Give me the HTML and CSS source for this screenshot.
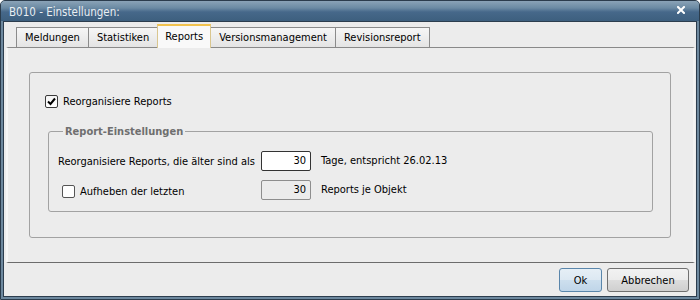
FILE: index.html
```html
<!DOCTYPE html>
<html lang="de">
<head>
<meta charset="utf-8">
<title>B010 - Einstellungen</title>
<link rel="stylesheet" href="styles.css">
</head>
<body>
<div class="window">
  <div class="titlebar">
    <span class="title">B010 - Einstellungen:</span>
    <svg class="close" width="8" height="8" viewBox="0 0 8 8"><path d="M1 1 L7 7 M7 1 L1 7" stroke="#fff" stroke-width="2" stroke-linecap="square"/></svg>
  </div>
  <div class="client">
    <div class="tabs">
      <div class="tab">Meldungen</div>
      <div class="tab">Statistiken</div>
      <div class="tab active">Reports</div>
      <div class="tab">Versionsmanagement</div>
      <div class="tab">Revisionsreport</div>
    </div>
    <div class="panel">
      <div class="group">
        <div class="check-row">
          <span class="cb"><svg width="11" height="11" viewBox="0 0 11 11"><path d="M2 5.5 L4.5 8 L9 2.5" fill="none" stroke="#000" stroke-width="2"/></svg></span>
          <span>Reorganisiere Reports</span>
        </div>
        <fieldset class="subgroup">
          <legend>Report-Einstellungen</legend>
          <div class="row">
            <span class="row-label">Reorganisiere Reports, die älter sind als</span>
            <span class="field">30</span>
            <span class="after">Tage, entspricht 26.02.13</span>
          </div>
          <div class="row">
            <span class="row-label">
              <span class="check-row inner"><span class="cb"></span><span>Aufheben der letzten</span></span>
            </span>
            <span class="field disabled">30</span>
            <span class="after">Reports je Objekt</span>
          </div>
        </fieldset>
      </div>
    </div>
    <div class="footer">
      <button class="btn default">Ok</button>
      <button class="btn">Abbrechen</button>
    </div>
  </div>
</div>
</body>
</html>
```

FILE: styles.css
```css
* { box-sizing: border-box; }
html, body { margin: 0; padding: 0; }
body {
  width: 700px;
  height: 300px;
  font-family: "DejaVu Sans Condensed", "DejaVu Sans", sans-serif;
  font-size: 11px;
  color: #000;
  background: #ffffff;
}
.window {
  width: 700px;
  height: 300px;
  display: flex;
  flex-direction: column;
  background: #6d889e;
  border: 1px solid #2b3c4c;
  border-radius: 5px 5px 0 0;
  overflow: hidden;
}
.titlebar {
  height: 20px;
  flex: none;
  display: flex;
  align-items: center;
  justify-content: space-between;
  padding: 0 14px 0 8px;
  background: linear-gradient(#8aa3b7 0%, #6b8aa3 35%, #46688a 55%, #3d5f7e 100%);
  color: #e9eef2;
  font-size: 11.5px;
}
.title { padding-top: 1px; }
.close { display: block; margin-top: -2px; }
.client {
  flex: 1;
  margin: 0 2px 2px;
  border: 1px solid #2c3d4e;
  background: #ececec;
  display: flex;
  flex-direction: column;
}
.tabs {
  height: 25px;
  flex: none;
  display: flex;
  align-items: flex-end;
  padding-left: 12px;
}
.tab {
  height: 20px;
  padding: 2px 8px 0 8px;
  border: 1px solid #8b8b8b;
  border-bottom: none;
  margin-right: -1px;
  background: linear-gradient(#f6f6f6, #e4e4e4);
  line-height: 16px;
  white-space: nowrap;
}
.tab.active {
  height: 24px;
  margin-bottom: -1px;
  padding: 3px 7px 0 7px;
  border: 1px solid #d9c68f;
  border-top: 2px solid #f2c34f;
  border-bottom: none;
  background: #f9f9f9;
  position: relative;
  z-index: 1;
}
.panel {
  height: 216px;
  flex: none;
  margin: 0 1px 0 2px;
  border-top: 1px solid #898989;
  border-bottom: 1px solid #6c6c6c;
  border-left: 2px solid #f6f6f6;
  border-right: 2px solid #f3f3f3;
  padding: 24px 0 0 21px;
}
.group {
  width: 642px;
  height: 166px;
  border: 1px solid #a2a2a2;
  border-radius: 3px;
  padding: 22px 0 0 15px;
}
.check-row {
  display: flex;
  align-items: center;
  gap: 5px;
  height: 13px;
  line-height: 13px;
}
.cb {
  width: 13px;
  height: 13px;
  flex: none;
  border: 1px solid #3a3a3a;
  border-radius: 2px;
  background: linear-gradient(#f4f4f4, #ffffff);
  display: flex;
  align-items: center;
  justify-content: center;
}
.cb svg { display: block; }
.subgroup {
  margin: 17px 0 0 3px;
  width: 605px;
  height: 87px;
  border: 1px solid #a2a2a2;
  border-radius: 3px;
  padding: 13px 0 0 9px;
}
.subgroup legend {
  margin-left: 5px;
  padding: 0 2px;
  font-weight: bold;
  color: #6f6f6f;
  line-height: 13px;
}
.row {
  display: flex;
  align-items: center;
  height: 20px;
}
.row + .row { margin-top: 9px; }
.row-label {
  width: 203px;
  flex: none;
  white-space: nowrap;
}
.check-row.inner {
  margin-left: 4px;
  margin-top: 3px;
}
.check-row.inner .cb { border-color: #555; background: #fff; }
.field {
  width: 50px;
  height: 20px;
  flex: none;
  border: 1px solid #333;
  border-radius: 2px;
  background: #fff;
  text-align: right;
  padding-right: 4px;
  line-height: 18px;
}
.field.disabled {
  border-color: #8e8e8e;
  background: #ececec;
}
.after {
  margin-left: 10px;
  margin-top: -2px;
}
.footer {
  flex: 1;
  display: flex;
  justify-content: flex-end;
  align-items: flex-start;
  gap: 5px;
  padding: 5px 7px 0 0;
}
.btn {
  height: 24px;
  border: 1px solid #707070;
  border-radius: 3px;
  background: linear-gradient(#f2f2f2 0%, #ebebeb 50%, #dddddd 51%, #cfcfcf 100%);
  font-family: inherit;
  font-size: 11px;
  color: #000;
  padding: 0;
  margin: 0;
}
.btn.default {
  width: 43px;
  border-color: #5a86ab;
  background: linear-gradient(#e6eff6 0%, #dce8f2 50%, #cddfee 51%, #bfd5e8 100%);
}
.btn:not(.default) { width: 82px; }
```
